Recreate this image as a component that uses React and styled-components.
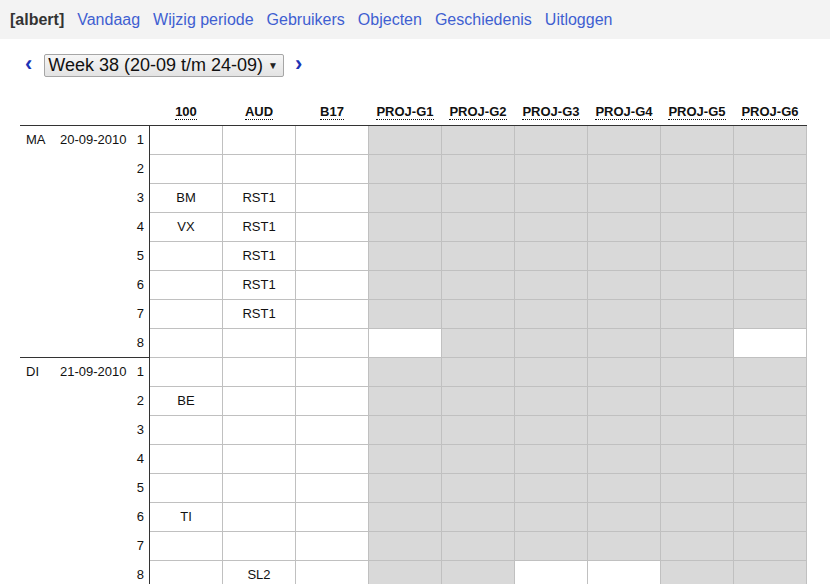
import React from 'react'
import styled, { createGlobalStyle } from 'styled-components'

const GlobalStyle = createGlobalStyle`
  body {
    margin: 0;
    background: #fff;
    font-family: "Liberation Sans", Arial, sans-serif;
    color: #111;
  }
`

const TopBar = styled.div`
  display: flex;
  align-items: center;
  gap: 13px;
  height: 39px;
  padding-left: 10px;
  background: #f3f3f3;
  font-size: 16px;
`

const User = styled.span`
  font-weight: bold;
  color: #333;
`

const NavLink = styled.a`
  color: #3f5fd1;
  text-decoration: none;
  cursor: pointer;
`

const WeekNav = styled.div`
  display: flex;
  align-items: center;
  height: 23px;
  margin: 15px 0 20px 25px;
`

const Arrow = styled.a`
  font-size: 22px;
  font-weight: bold;
  color: #1b33b5;
  line-height: 20px;
  margin-top: -3px;
  text-decoration: none;
  cursor: pointer;
`

const WeekSelect = styled.div`
  display: flex;
  align-items: center;
  gap: 5px;
  height: 21px;
  margin: 0 11px 0 12px;
  padding: 0 5px 0 3px;
  border: 1px solid #a6a6a6;
  border-radius: 2px;
  background: linear-gradient(#f6f6f6, #e3e3e3);
  font-size: 18px;
  color: #111;
`

const Caret = styled.span`
  font-size: 10px;
  color: #222;
`

const Grid = styled.table`
  margin-left: 20px;
  border-collapse: collapse;
  table-layout: fixed;
  font-size: 13px;
`

const HeadCell = styled.th`
  height: 28px;
  padding: 0;
  border-bottom: 1px solid #333;
  font-size: 13px;
  font-weight: bold;
  text-align: center;
  vertical-align: middle;
`

const RoomName = styled.abbr`
  text-decoration: none;
  border-bottom: 1px dotted #111;
  color: #111;
`

const Label = styled.td`
  height: 27px;
  padding: 0 ${p => (p.$right ? '5px' : '0')} 1px ${p => (p.$right ? '0' : '6px')};
  text-align: ${p => (p.$right ? 'right' : 'left')};
  vertical-align: middle;
  white-space: nowrap;
  border-top: ${p => (p.$dayStart ? '1px solid #333' : 'none')};
  border-right: ${p => (p.$right ? '1px solid #333' : 'none')};
`

const Slot = styled.td`
  height: 27px;
  padding: 0 0 1px;
  text-align: center;
  vertical-align: middle;
  border: 1px solid #c0c0c0;
  background: ${p => (p.$blocked ? '#d9d9d9' : '#fff')};
`

const rooms = ['100', 'AUD', 'B17', 'PROJ-G1', 'PROJ-G2', 'PROJ-G3', 'PROJ-G4', 'PROJ-G5', 'PROJ-G6']

const days = [
  {
    name: 'MA',
    date: '20-09-2010',
    entries: { '3-100': 'BM', '4-100': 'VX', '3-AUD': 'RST1', '4-AUD': 'RST1', '5-AUD': 'RST1', '6-AUD': 'RST1', '7-AUD': 'RST1' },
    open: ['8-PROJ-G1', '8-PROJ-G6'],
  },
  {
    name: 'DI',
    date: '21-09-2010',
    entries: { '2-100': 'BE', '6-100': 'TI', '8-AUD': 'SL2' },
    open: ['8-PROJ-G3', '8-PROJ-G4'],
  },
  { name: 'WO', date: '22-09-2010', entries: {}, open: [] },
  { name: 'DO', date: '23-09-2010', entries: {}, open: [] },
  { name: 'VR', date: '24-09-2010', entries: {}, open: [] },
]

const periods = [1, 2, 3, 4, 5, 6, 7, 8]

const menu = ['Vandaag', 'Wijzig periode', 'Gebruikers', 'Objecten', 'Geschiedenis', 'Uitloggen']

export default function App() {
  return (
    <>
      <GlobalStyle />
      <TopBar>
        <User>[albert]</User>
        {menu.map(item => (
          <NavLink key={item}>{item}</NavLink>
        ))}
      </TopBar>
      <WeekNav>
        <Arrow>‹</Arrow>
        <WeekSelect>
          Week 38 (20-09 t/m 24-09)
          <Caret>▼</Caret>
        </WeekSelect>
        <Arrow>›</Arrow>
      </WeekNav>
      <Grid>
        <colgroup>
          <col style={{ width: 34 }} />
          <col style={{ width: 72 }} />
          <col style={{ width: 23 }} />
          {rooms.map(r => (
            <col key={r} style={{ width: 73 }} />
          ))}
        </colgroup>
        <thead>
          <tr>
            <HeadCell colSpan={3} />
            {rooms.map(r => (
              <HeadCell key={r}>
                <RoomName title={r}>{r}</RoomName>
              </HeadCell>
            ))}
          </tr>
        </thead>
        <tbody>
          {days.map((day, di) =>
            periods.map(p => {
              const first = p === 1
              const sep = first && di > 0
              return (
                <tr key={day.name + p}>
                  <Label $dayStart={sep}>{first ? day.name : ''}</Label>
                  <Label $dayStart={sep}>{first ? day.date : ''}</Label>
                  <Label $dayStart={sep} $right>{p}</Label>
                  {rooms.map((r, ri) => {
                    const key = `${p}-${r}`
                    const blocked = ri >= 3 && !day.open.includes(key)
                    return (
                      <Slot key={r} $blocked={blocked}>
                        {day.entries[key] || ''}
                      </Slot>
                    )
                  })}
                </tr>
              )
            })
          )}
        </tbody>
      </Grid>
    </>
  )
}
